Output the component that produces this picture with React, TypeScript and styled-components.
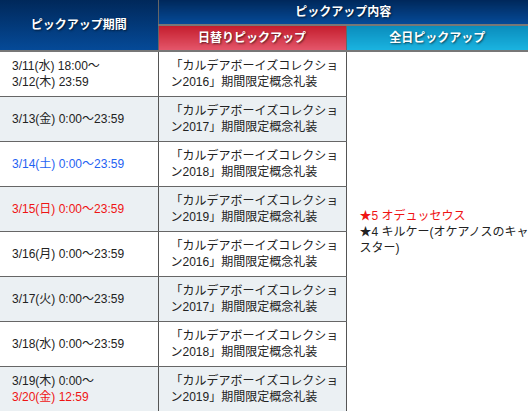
import styled, { createGlobalStyle } from 'styled-components';

const GlobalStyle = createGlobalStyle`
    body {
        margin: 0;
        background: #ffffff;
        font-family: 'Liberation Sans', 'Noto Sans CJK JP', sans-serif;
    }
`;

type Tone = 'normal' | 'sat' | 'sun';

interface PickupRow {
    lines: { text: string; tone: Tone }[];
    year: string;
}

const rows: PickupRow[] = [
    {
        lines: [
            { text: '3/11(水) 18:00～', tone: 'normal' },
            { text: '3/12(木) 23:59', tone: 'normal' },
        ],
        year: '2016',
    },
    { lines: [{ text: '3/13(金) 0:00～23:59', tone: 'normal' }], year: '2017' },
    { lines: [{ text: '3/14(土) 0:00～23:59', tone: 'sat' }], year: '2018' },
    { lines: [{ text: '3/15(日) 0:00～23:59', tone: 'sun' }], year: '2019' },
    { lines: [{ text: '3/16(月) 0:00～23:59', tone: 'normal' }], year: '2016' },
    { lines: [{ text: '3/17(火) 0:00～23:59', tone: 'normal' }], year: '2017' },
    { lines: [{ text: '3/18(水) 0:00～23:59', tone: 'normal' }], year: '2018' },
    {
        lines: [
            { text: '3/19(木) 0:00～', tone: 'normal' },
            { text: '3/20(金) 12:59', tone: 'sun' },
        ],
        year: '2019',
    },
];

const App = () => {
    return (
        <>
            <GlobalStyle />
            <Table>
                <colgroup>
                    <col style={{ width: 158 }} />
                    <col style={{ width: 188 }} />
                    <col />
                </colgroup>
                <thead>
                    <tr>
                        <HeadCell rowSpan={2} variant="navy">
                            ピックアップ期間
                        </HeadCell>
                        <HeadCell colSpan={2} variant="navy" short>
                            ピックアップ内容
                        </HeadCell>
                    </tr>
                    <tr>
                        <HeadCell variant="red" short>
                            日替りピックアップ
                        </HeadCell>
                        <HeadCell variant="cyan" short>
                            全日ピックアップ
                        </HeadCell>
                    </tr>
                </thead>
                <tbody>
                    {rows.map((row, i) => (
                        <tr key={`pickup_row_${i}`}>
                            <DateCell striped={i % 2 === 1}>
                                {row.lines.map((line, j) => (
                                    <Line key={j} tone={line.tone}>
                                        {line.text}
                                    </Line>
                                ))}
                            </DateCell>
                            <ItemCell striped={i % 2 === 1}>
                                <Line tone="normal">「カルデアボーイズコレクショ</Line>
                                <Line tone="normal">ン{row.year}」期間限定概念礼装</Line>
                            </ItemCell>
                            {i === 0 && (
                                <AllDayCell rowSpan={rows.length}>
                                    <Line tone="sun">★5 オデュッセウス</Line>
                                    <Line tone="normal">★4 キルケー(オケアノスのキャ</Line>
                                    <Line tone="normal">スター)</Line>
                                </AllDayCell>
                            )}
                        </tr>
                    ))}
                </tbody>
            </Table>
        </>
    );
};

const gradients = {
    navy: 'linear-gradient(to bottom, #00285a 0%, #054a98 100%)',
    red: 'linear-gradient(to bottom, #c41d2d 0%, #e4566a 100%)',
    cyan: 'linear-gradient(to bottom, #0a8cbc 0%, #1ab3e0 100%)',
};

const Table = styled.table`
    width: 528px;
    border-collapse: collapse;
    table-layout: fixed;
    font-size: 12px;
    line-height: 16px;
    color: #222;
`;

const HeadCell = styled.th<{ variant: 'navy' | 'red' | 'cyan'; short?: boolean }>`
    background: ${(p) => gradients[p.variant]};
    color: #fff;
    font-weight: bold;
    font-size: 12px;
    text-align: center;
    text-shadow: 1px 1px 2px rgba(0, 0, 0, 0.6);
    height: ${(p) => (p.short ? '24px' : 'auto')};
    padding: 0;
    border: 1px solid #666;
    border-top: none;
    border-bottom: 2px solid #777;
    &:first-child {
        border-left: none;
    }
    &:last-child {
        border-right: none;
    }
`;

const DateCell = styled.td<{ striped: boolean }>`
    background: ${(p) => (p.striped ? '#ebf0f3' : '#ffffff')};
    height: 44px;
    padding: 0 4px 0 12px;
    border-bottom: 1px solid #666;
    border-right: 1px solid #555;
    vertical-align: middle;
`;

const ItemCell = styled(DateCell)`
    padding: 0 2px 0 12px;
`;

const Line = styled.div<{ tone: Tone }>`
    white-space: nowrap;
    color: ${(p) =>
        p.tone === 'sat' ? '#1f62f2' : p.tone === 'sun' ? '#ef1414' : '#222'};
`;

const AllDayCell = styled.td`
    background: #fff;
    padding: 0 2px 0 13px;
    vertical-align: middle;
`;

export default App;
